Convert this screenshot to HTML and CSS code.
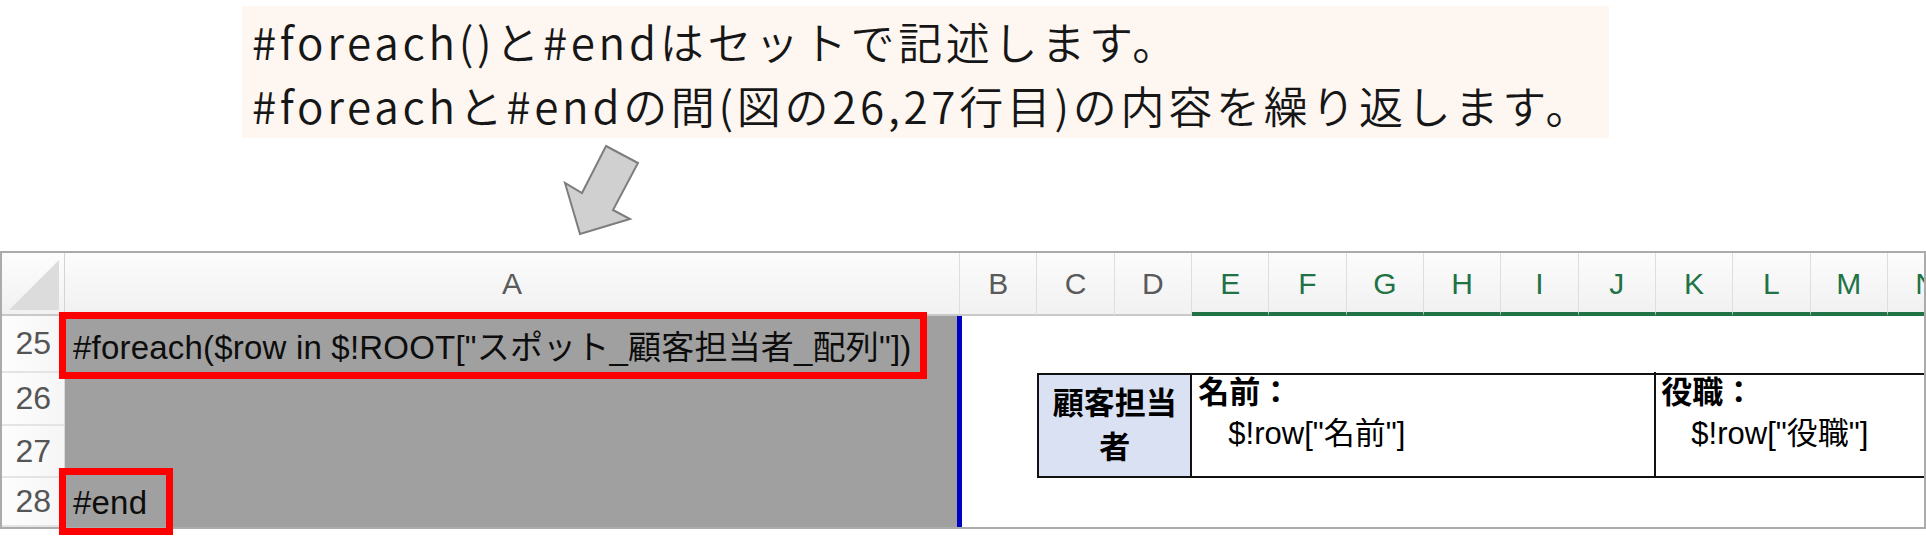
FILE: index.html
```html
<!DOCTYPE html>
<html lang="ja">
<head>
  <meta charset="UTF-8" />
  <meta name="viewport" content="width=device-width, initial-scale=1" />
  <title>#foreach と #end</title>
  <link rel="stylesheet" href="styles.css">
</head>
<body>
  <div class="note">
    <p>#foreach()と#endはセットで記述します。</p>
    <p>#foreachと#endの間(図の26,27行目)の内容を繰り返します。</p>
  </div>

  <div class="pointer">
    <svg width="90" height="113" viewBox="558 138 90 113">
      <polygon points="606,146 638,163 613,210 630,219 580,234 565,183 582,193" />
    </svg>
  </div>

  <div class="sheet">
    <div class="corner"></div>
    <div class="col-head">A</div>
    <div class="col-head">B</div>
    <div class="col-head">C</div>
    <div class="col-head">D</div>
    <div class="col-head on">E</div>
    <div class="col-head on">F</div>
    <div class="col-head on">G</div>
    <div class="col-head on">H</div>
    <div class="col-head on">I</div>
    <div class="col-head on">J</div>
    <div class="col-head on">K</div>
    <div class="col-head on">L</div>
    <div class="col-head on">M</div>
    <div class="col-head on">N</div>

    <div class="row-head">25</div>
    <div class="cell-a">
      #foreach($row in $!ROOT["スポット_顧客担当者_配列"])
      <span class="mark mark-loop"></span>
    </div>

    <div class="row-head">26</div>
    <div class="cell-a"></div>

    <div class="row-head">27</div>
    <div class="cell-a"></div>

    <div class="row-head">28</div>
    <div class="cell-a">
      #end
      <span class="mark mark-end"></span>
    </div>

    <div class="contacts">
      <div class="label">顧客担当<br>者</div>
      <div class="field">名前：<span class="value">$!row["名前"]</span></div>
      <div class="field last">役職：<span class="value">$!row["役職"]</span></div>
    </div>
  </div>
</body>
</html>
```

FILE: styles.css
```css
*, *::before, *::after { margin: 0; padding: 0; box-sizing: border-box; }

body {
  background: #fff;
  color: #111;
  width: 1926px;
  height: 536px;
  overflow: hidden;
}

/* explanation box at the top */
.note {
  margin: 6px 0 0 242px;
  width: 1367px;
  height: 132px;
  padding: 3px 10px 0;
  background: #fdf6f1;
  font-family: "Noto Sans CJK JP", sans-serif;
  font-size: 44px;
  font-weight: 350;
  letter-spacing: 3.7px;
  line-height: 64px;
  color: #161616;
}

.pointer {
  height: 113px;
}

.pointer svg {
  display: block;
  margin-left: 558px;
}

.pointer polygon {
  fill: #d1d0d1;
  stroke: #7d7d7d;
  stroke-width: 2;
  stroke-linejoin: miter;
}

/* spreadsheet */
.sheet {
  display: grid;
  grid-template-columns: 63px 895px repeat(13, 77.33px);
  grid-template-rows: 63px 57px 53px 52px 49px;
  width: 1926px;
  overflow-x: clip;
  overflow-y: visible;
  border: 2px solid #ababab;
  background: #fff;
  font-family: "Liberation Sans", "Noto Sans CJK JP", sans-serif;
}

.corner {
  position: relative;
  background: linear-gradient(#fdfdfd, #f1f1f1);
  border-right: 1px solid #d4d4d4;
  border-bottom: 2px solid #c9c9c9;
}

.corner::after {
  content: "";
  position: absolute;
  right: 5px;
  bottom: 4px;
  width: 50px;
  height: 50px;
  background: #dcdcdc;
  clip-path: polygon(100% 0, 100% 100%, 0 100%);
}

.col-head {
  display: flex;
  align-items: center;
  justify-content: center;
  background: linear-gradient(#fcfcfc, #f1f1f1);
  border-right: 1px solid #dedede;
  border-bottom: 2px solid #c9c9c9;
  font-size: 30px;
  color: #5a5a5a;
}

.col-head.on {
  color: #217346;
  border-bottom: 4px solid #217346;
  padding-top: 2px;
}

.row-head {
  grid-column: 1;
  display: flex;
  align-items: center;
  justify-content: flex-end;
  padding-right: 13px;
  background: linear-gradient(90deg, #fdfdfd, #f6f6f6);
  border-bottom: 2px solid #e4e4e4;
  border-right: 1px solid #dadada;
  font-size: 32px;
  color: #555;
}

.cell-a {
  grid-column: 2;
  position: relative;
  display: flex;
  align-items: center;
  padding-left: 8px;
  background: #a0a0a0;
  border-right: 3px solid #0000c4;
  box-shadow: 2px 0 0 #0000c4;
  font-size: 33px;
  letter-spacing: 0.2px;
  color: #0d0d0d;
  white-space: nowrap;
}

/* red frames drawn over the cells */
.mark {
  position: absolute;
  z-index: 2;
  border: 7px solid #ff0000;
}

.mark-loop {
  left: -6px;
  top: -4px;
  width: 868px;
  height: 67px;
}

.mark-end {
  left: -6px;
  top: -10px;
  width: 114px;
  height: 67px;
}

/* customer contact block, rows 26-27 */
.contacts {
  grid-column: 4 / -1;
  grid-row: 3 / 5;
  display: grid;
  grid-template-columns: 153px 464px 1fr;
  border: 2px solid #111;
  border-right: none;
  font-size: 31px;
  color: #000;
}

.label {
  display: flex;
  align-items: center;
  justify-content: center;
  text-align: center;
  background: #d9e1f2;
  border-right: 2px solid #111;
  font-weight: 700;
  line-height: 44px;
}

.field {
  padding: 0 0 0 6px;
  margin-top: -3px;
  border-right: 2px solid #111;
  font-weight: 700;
  line-height: 41px;
  white-space: nowrap;
}

.field.last {
  border-right: none;
  padding-left: 5px;
}

.value {
  display: block;
  padding-left: 30px;
  font-weight: 400;
}
```
